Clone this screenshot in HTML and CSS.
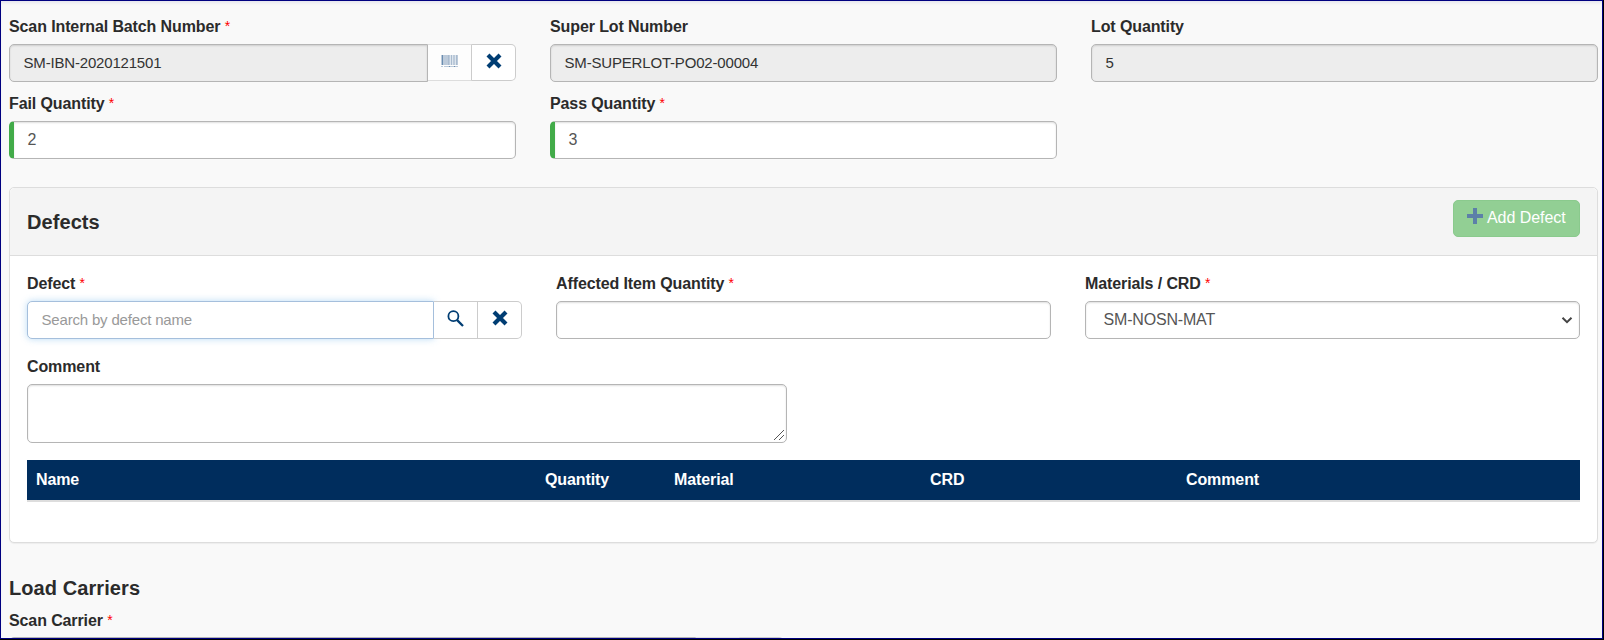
FILE: index.html
```html
<!DOCTYPE html>
<html lang="en">
<head>
<meta charset="utf-8">
<title>Defects</title>
<link rel="stylesheet" href="styles.css">
</head>
<body>
<svg class="sprite" width="0" height="0">
  <symbol id="cross" viewBox="0 0 16 16"><path d="M2 2 14 14M14 2 2 14" stroke="currentColor" stroke-width="4.2" fill="none"/></symbol>
  <symbol id="search" viewBox="0 0 17 17"><circle cx="6.4" cy="6.2" r="5" stroke="currentColor" stroke-width="1.8" fill="none"/><path d="M9.9 9.9 16 16" stroke="currentColor" stroke-width="2.3"/></symbol>
</svg>
<main class="screen">
  <section class="grid grid-top">
    <div class="field">
      <label class="label">Scan Internal Batch Number <span class="req">*</span></label>
      <div class="group">
        <div class="input readonly">SM-IBN-2020121501</div>
        <button class="addon addon-short addon-off">
          <svg class="barcode" width="17" height="13" viewBox="0 0 17 13" shape-rendering="crispEdges"><path fill="#bccada" d="M0 0h17v10H0zM0 11h2v1H0zM3 11h14v1H3z"/><path fill="#6a8db0" d="M1 0h1v10H1zM8 11h1v1H8zM13 11h1v1h-1z"/><path fill="#a9bbcf" d="M7 0h1v10H7zM10 0h1v10h-1zM15 0h1v10h-1z"/><path fill="#dde5ed" d="M9 0h1v10H9zM11 0h1v10h-1zM14 0h1v10h-1z"/></svg>
        </button>
        <button class="addon addon-short addon-last"><svg class="icon" width="16" height="16"><use href="#cross"/></svg></button>
      </div>
    </div>
    <div class="field"><label class="label">Super Lot Number</label><div class="input readonly">SM-SUPERLOT-PO02-00004</div></div>
    <div class="field"><label class="label">Lot Quantity</label><div class="input readonly">5</div></div>
    <div class="field"><label class="label">Fail Quantity <span class="req">*</span></label><div class="input valid">2</div></div>
    <div class="field"><label class="label">Pass Quantity <span class="req">*</span></label><div class="input valid">3</div></div>
  </section>

  <section class="panel">
    <header class="panel-head">
      <h2 class="title">Defects</h2>
      <button class="add"><svg class="plus" width="16" height="16" viewBox="0 0 16 16"><path d="M6 0h4v6h6v4h-6v6H6v-6H0V6h6z" fill="#5c80a8"/></svg><span class="add-text">Add Defect</span></button>
    </header>
    <div class="panel-body">
      <div class="grid">
        <div class="field">
          <label class="label">Defect <span class="req">*</span></label>
          <div class="group">
            <div class="input focused">Search by defect name</div>
            <button class="addon"><svg class="icon" width="17" height="17"><use href="#search"/></svg></button>
            <button class="addon addon-last"><svg class="icon" width="16" height="16"><use href="#cross"/></svg></button>
          </div>
        </div>
        <div class="field"><label class="label">Affected Item Quantity <span class="req">*</span></label><div class="input"></div></div>
        <div class="field"><label class="label">Materials / CRD <span class="req">*</span></label>
          <div class="input select"><span>SM-NOSN-MAT</span><svg width="12" height="8" viewBox="0 0 12 8"><path d="M1.5 1.7 6 6.1l4.5-4.4" stroke="#444" stroke-width="2" fill="none"/></svg></div>
        </div>
      </div>
      <div class="field comment">
        <label class="label">Comment</label>
        <textarea class="textarea"></textarea>
        <svg class="grip" width="12" height="12" viewBox="0 0 12 12"><path d="M1 11 11 1M6 11l5-5" stroke="#555" stroke-width="1" fill="none"/></svg>
      </div>
      <div class="table-head">
        <span>Name</span><span>Quantity</span><span>Material</span><span>CRD</span><span>Comment</span>
      </div>
    </div>
  </section>

  <section class="carriers">
    <h2 class="title">Load Carriers</h2>
    <label class="label">Scan Carrier <span class="req">*</span></label>
    <div class="group carrier-group"><div class="input readonly"></div><button class="addon addon-off"></button><button class="addon addon-last"></button></div>
  </section>
</main>
</body>
</html>
```
FILE: styles.css
```css
* { box-sizing: border-box; }
body { margin: 0; font-family: "Liberation Sans", Arial, sans-serif; font-size: 16px; color: #2b2b2b; background: #000; overflow: hidden; }
.sprite { display: block; height: 0; }
.screen { width: 1603px; height: 639px; padding: 16px 4px 0 8px; border: 1px solid #000080; background: #f9f9f9; box-shadow: inset 0 3px 3px -1px #e6e6ee; overflow: hidden; }
.grid { display: grid; grid-template-columns: repeat(3, 1fr); column-gap: 34px; }
.grid-top { row-gap: 12px; }
.field { min-width: 0; }
.label { display: block; height: 27px; line-height: 20px; font-weight: bold; letter-spacing: -.11px; white-space: nowrap; }
.req { font-weight: normal; font-size: 14px; color: #f00; position: relative; top: -1px; }
.input { flex: 1; height: 38px; padding: 0 13.5px; border: 1px solid #b5b5b5; border-radius: 5px; background: #fff; line-height: 36px; font-size: 15px; letter-spacing: -.18px; white-space: nowrap; box-shadow: inset 0 1px 2px rgba(0, 0, 0, .13); color: #555; }
.readonly { background: #ededed; color: #333; }
.valid { border-left: 5px solid #42ab49; font-size: 16px; }
.group { display: flex; align-items: flex-start; }
.group .input { border-radius: 5px 0 0 5px; }
.focused { border-color: #a5bfdc; color: #999; box-shadow: 0 0 7px rgba(102, 175, 233, .45); }
.addon { width: 44px; height: 38px; padding: 0 0 4px; border: 1px solid #ccc; border-left: 0; background: #fff; display: flex; align-items: center; justify-content: center; color: #003d73; }
.addon-short { height: 37px; padding-bottom: 3px; }
.addon-off { background: #fdfdfd; border-color: #ddd; border-right-color: #ccc; }
.addon-last { border-radius: 0 5px 5px 0; }
.icon, .barcode { display: block; }
.panel { margin-top: 28px; height: 356px; border: 1px solid #ddd; border-radius: 5px; background: #fff; box-shadow: 0 1px 1px rgba(0, 0, 0, .05); }
.panel-head { display: flex; justify-content: space-between; height: 68px; padding: 12px 17px 0; border-bottom: 1px solid #ddd; border-radius: 5px 5px 0 0; background: #f4f4f4; }
.title { margin: 0; font-size: 20px; line-height: 24px; font-weight: bold; letter-spacing: .08px; }
.panel-head .title { padding-top: 10px; }
.add { display: flex; width: 127px; height: 37px; padding: 0 0 0 13px; border: 1px solid #8aca8d; border-radius: 5px; background: #92cf94; color: #fff; font: 16px "Liberation Sans", Arial, sans-serif; }
.plus { margin-top: 7px; }
.add-text { margin-left: 4px; line-height: 34px; white-space: nowrap; letter-spacing: -.05px; }
.panel-body { padding: 18px 17px 0; }
.select { display: flex; align-items: center; justify-content: space-between; padding: 0 6px 0 17.5px; font-size: 16px; }
.comment { position: relative; width: 760px; margin-top: 18px; }
.textarea { display: block; width: 760px; height: 59px; margin: 0; border: 1px solid #b5b5b5; border-radius: 5px; box-shadow: inset 0 1px 2px rgba(0, 0, 0, .13); resize: none; outline: 0; }
.grip { position: absolute; right: 2px; bottom: 2px; }
.table-head { display: grid; grid-template-columns: 509px 129px 256px 256px 1fr; margin-top: 17px; height: 42px; padding-left: 9px; border-bottom: 2px solid #ddd; background: #002d5d; background-clip: padding-box; color: #fff; font-weight: bold; line-height: 39px; letter-spacing: -.11px; }
.carriers { padding-top: 33px; }
.carriers .title { margin-bottom: 11px; }
.carriers .label { height: 26px; }
.carrier-group { width: 775px; }
```
